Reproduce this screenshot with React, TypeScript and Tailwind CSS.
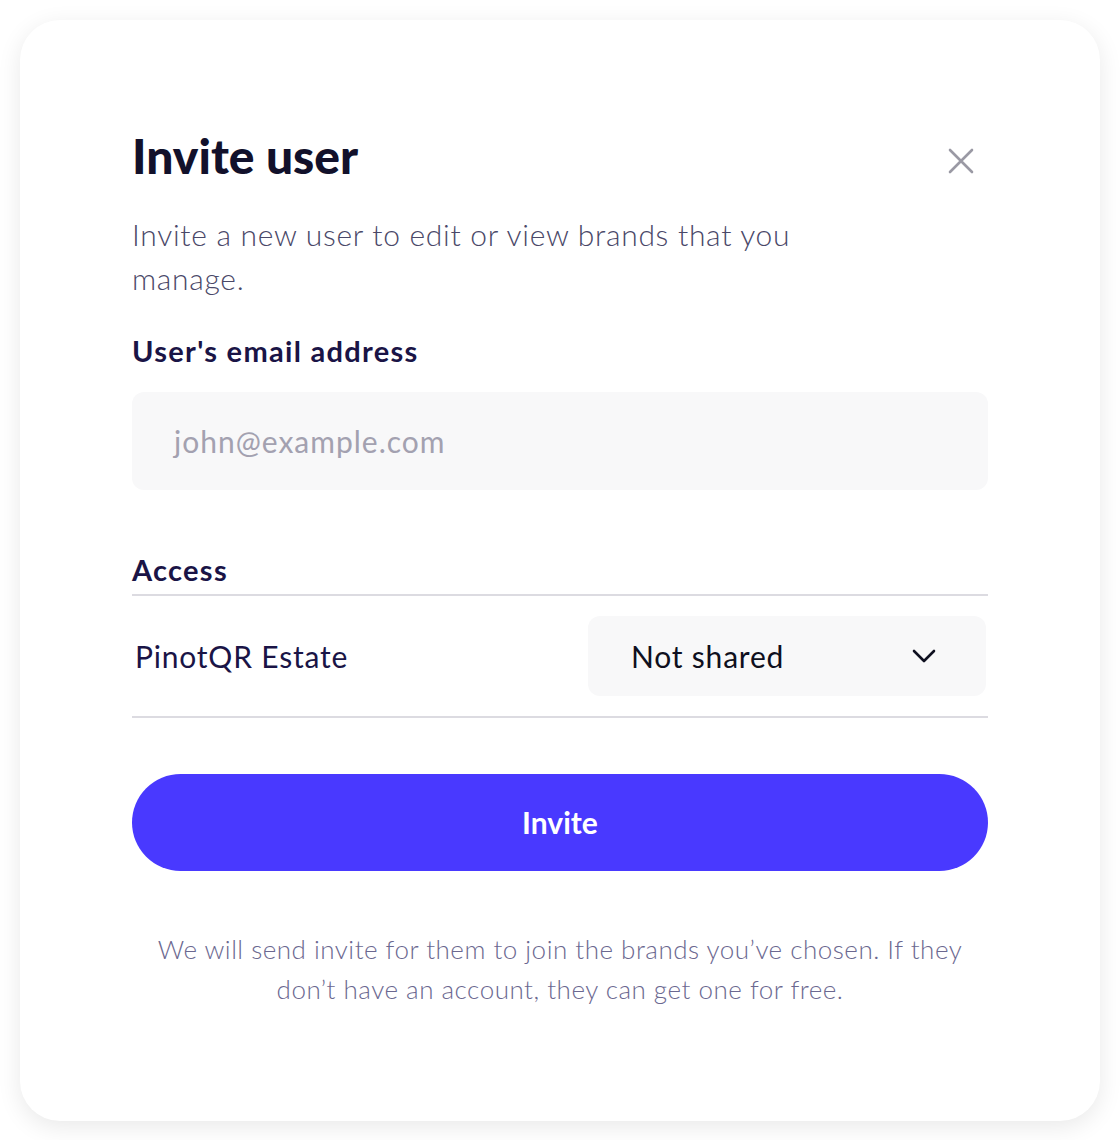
import React from "react";

export default function App() {
  return (
    <div className="min-h-[1140px] w-[1120px] bg-white px-[20px] pt-[20px] pb-[20px]" style={{ fontFamily: "Lato, 'Noto Sans', sans-serif" }}>
      <div className="rounded-[40px] bg-white shadow-[0_6px_24px_rgba(0,0,0,0.09)] px-[112px] pt-[108px] pb-[112px]">
        <div className="flex items-start justify-between">
          <h1 className="text-[48px] leading-[56px] font-black text-[#12112b]">Invite user</h1>
          <button className="mt-[20px] mr-[14px] text-[#9a99a4]">
            <svg width="26" height="26" viewBox="0 0 26 26" fill="none" stroke="currentColor" strokeWidth="2.6" strokeLinecap="round">
              <path d="M2 2L24 24M24 2L2 24" />
            </svg>
          </button>
        </div>
        <p className="mt-[28px] text-[30px] leading-[44px] font-light tracking-[0.7px] text-[#4a4868] w-[700px]">
          Invite a new user to edit or view brands that you manage.
        </p>
        <label className="block mt-[33px] text-[29px] leading-[36px] font-bold tracking-[1.3px] text-[#1a1446]">User's email address</label>
        <div className="mt-[23px] h-[98px] rounded-[12px] bg-[#f8f8f9] flex items-center px-[42px]">
          <span className="text-[30px] tracking-[1px] text-[#a3a1b0]">john@example.com</span>
        </div>
        <div className="mt-[62px] text-[29px] leading-[36px] font-bold tracking-[1.3px] text-[#1a1446]">Access</div>
        <div className="mt-[6px] border-t-2 border-[#dcdbe1]" />
        <div className="flex items-center justify-between pt-[20px] pb-[20px] border-b-2 border-[#dcdbe1]">
          <span className="pl-[3px] text-[30px] tracking-[0.8px] text-[#1a1446]">PinotQR Estate</span>
          <div className="w-[398px] mr-[2px] h-[80px] rounded-[12px] bg-[#f8f8f9] flex items-center justify-between pl-[43px] pr-[50px]">
            <span className="text-[30px] tracking-[0.8px] text-[#0f1020]">Not shared</span>
            <svg width="24" height="14" viewBox="0 0 24 14" fill="none" stroke="#0f1020" strokeWidth="2.6" strokeLinecap="round" strokeLinejoin="round">
              <path d="M2 2L12 12L22 2" />
            </svg>
          </div>
        </div>
        <button className="mt-[56px] w-full h-[97px] rounded-full bg-[#4939ff] text-white text-[30px] font-bold">Invite</button>
        <p className="mt-[58px] text-center text-[26px] leading-[40px] font-light tracking-[0.5px] text-[#6b6890] px-[10px]">
          We will send invite for them to join the brands you’ve chosen. If they don’t have an account, they can get one for free.
        </p>
      </div>
    </div>
  );
}
